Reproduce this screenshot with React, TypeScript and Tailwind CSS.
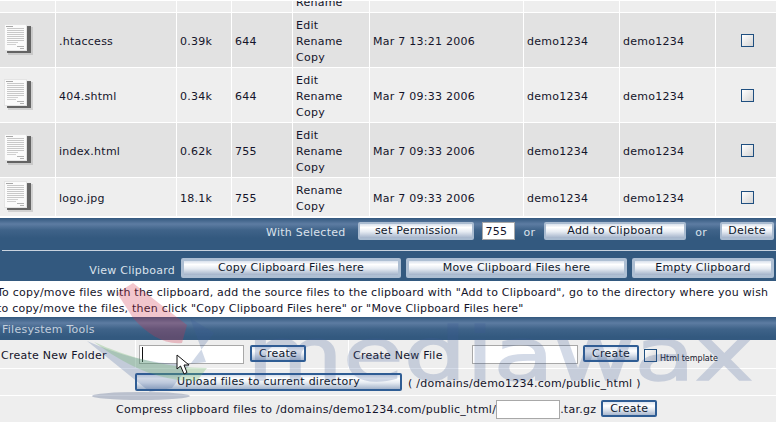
const rowGrid = 'grid grid-cols-[55px_120px_54px_60px_76px_153px_95px_95px_60px] gap-x-px';
const cell = 'flex items-center px-[3px] pt-[3px]';
const barBtn =
  'h-[18px] border-2 border-[#a9bbd0] rounded-[2px] bg-[linear-gradient(#d9e1ec,#ffffff_25%,#e6ebf2_55%,#a3b3ca)] text-[#10182c] text-[11px] leading-[13px] pb-[5px] text-center';
const wideBtn =
  'h-[20px] border-[3px] border-[#aebfd3] rounded-[2px] bg-[linear-gradient(#d9e1ec,#ffffff_25%,#e6ebf2_55%,#a3b3ca)] text-[#10182c] text-[11px] leading-[13px] pb-[4px] text-center';
const createBtn =
  'w-[56px] h-[17px] border-2 border-[#2f5d94] rounded-[2px] bg-[linear-gradient(#dfe6f0,#ffffff_30%,#e6ebf2_55%,#a9b8ce)] text-[#10182c] text-[11px] leading-[13px] pb-0 text-center';
const textInput = 'h-[19px] border border-[#a8a8a8] bg-white';
const barBg =
  'bg-[linear-gradient(#33587e,#5d7ca2_6px,#3f6389_12px,#33597f_20px,#33597f)]';

const files = [
  { name: '.htaccess', size: '0.39k', perm: '644', actions: ['Edit', 'Rename', 'Copy'], date: 'Mar 7 13:21 2006', bg: 'bg-[#e2e2e2]' },
  { name: '404.shtml', size: '0.34k', perm: '644', actions: ['Edit', 'Rename', 'Copy'], date: 'Mar 7 09:33 2006', bg: 'bg-[#eeeeee]' },
  { name: 'index.html', size: '0.62k', perm: '755', actions: ['Edit', 'Rename', 'Copy'], date: 'Mar 7 09:33 2006', bg: 'bg-[#e2e2e2]' },
  { name: 'logo.jpg', size: '18.1k', perm: '755', actions: ['Rename', 'Copy'], date: 'Mar 7 09:33 2006', bg: 'bg-[#eeeeee]' },
];

function DocIcon() {
  return (
    <svg width="30" height="32" viewBox="0 0 30 32">
      <rect x="4" y="3" width="25" height="28" fill="#9a9a9a" opacity="0.35" />
      <rect x="3" y="2" width="24" height="27" fill="#4a4a4a" opacity="0.8" />
      <rect x="0.5" y="0.5" width="22" height="26" fill="#fbfbfb" stroke="#e4e4e4" />
      <path d="M2 2.5h7" stroke="#a8a8a8" />
      {[4, 6, 8, 10, 12, 14, 16].map((y) => (
        <path key={y} d={`M3 ${y + 0.5}h17`} stroke="#c8c8c8" />
      ))}
      <path d="M3 18.5h11M3 20.5h9" stroke="#d0d0d0" />
      <path d="M13 22.5h7M16 24.5h4" stroke="#b4b4b4" />
    </svg>
  );
}

function Checkbox() {
  return <div className="w-[13px] h-[13px] border border-[#1f4f80] bg-[linear-gradient(135deg,#ffffff,#d4d4d4)]" />;
}

function FileRow({ file, height }: { file: (typeof files)[number]; height: string }) {
  return (
    <div className={`${rowGrid} ${height} mb-px`}>
      <div className={`${file.bg} flex items-center pl-[4px]`}>
        <DocIcon />
      </div>
      <div className={`${file.bg} ${cell}`}>{file.name}</div>
      <div className={`${file.bg} ${cell}`}>{file.size}</div>
      <div className={`${file.bg} ${cell}`}>{file.perm}</div>
      <div className={`${file.bg} flex flex-col justify-center px-[3px] pt-[3px]`}>
        {file.actions.map((a) => (
          <div key={a}>{a}</div>
        ))}
      </div>
      <div className={`${file.bg} ${cell}`}>{file.date}</div>
      <div className={`${file.bg} ${cell}`}>demo1234</div>
      <div className={`${file.bg} ${cell}`}>demo1234</div>
      <div className={`${file.bg} flex items-center justify-center pl-[3px]`}>
        <Checkbox />
      </div>
    </div>
  );
}

function Watermark() {
  return (
    <div className="absolute left-0 top-0 w-[776px] h-[422px] pointer-events-none overflow-hidden">
      <svg width="776" height="422" viewBox="0 0 776 422" className="absolute left-0 top-0">
        <ellipse cx="141" cy="396" rx="49" ry="4" fill="#6b7a9c" opacity="0.4" />
        <path d="M133 283 L187 325 L182 343 C165 345 148 335 133 318 L117 293 Z" fill="#d2344a" opacity="0.28" />
        <path
          d="M87 341 L150 392 L172 388 L214 333 L190 318 L198 340 L206 362 C170 368 130 360 87 341 Z"
          fill="#3c5a96"
          opacity="0.24"
        />
        <path d="M94 342 C125 356 165 368 207 368 L197 381 C160 382 125 365 94 342 Z" fill="#6cb56a" opacity="0.3" />
      </svg>
      <span className="absolute left-[247px] top-[311px] origin-left scale-x-[1.35] font-['DejaVu_Sans',sans-serif] text-[73px] leading-[88px] tracking-normal text-[#3c5a96] opacity-[0.22] [-webkit-text-stroke:1.5px_#3c5a96] whitespace-nowrap">
        mediawax
      </span>
      <svg width="16" height="24" viewBox="0 0 16 24" className="absolute left-[176px] top-[354px]">
        <path d="M1 1 L1 15 L4.5 12 L8 20 L11 18.5 L8 11 L13 11 Z" fill="#fff" stroke="#111" strokeWidth="1" />
      </svg>
    </div>
  );
}

export default function App() {
  return (
    <div className="relative w-[776px] h-[422px] overflow-hidden bg-white font-['DejaVu_Sans',sans-serif] text-[11px] leading-[16px] tracking-[0.25px] text-[#14142a]">
      {/* Table tail from the previous row */}
      <div className={`${rowGrid} mt-px mb-px h-[11px] overflow-hidden`}>
        {Array.from({ length: 9 }).map((_, i) => (
          <div key={i} className="bg-[#eeeeee] h-[11px] flex items-end px-[3px] pb-[1px]">
            {i === 4 ? <div>Rename</div> : null}
          </div>
        ))}
      </div>

      {files.map((f, i) => (
        <FileRow key={f.name} file={f} height={i === 3 ? 'h-[38px]' : 'h-[54px]'} />
      ))}

      {/* With selected / clipboard */}
      <div className={`mt-[2px] h-[63px] ${barBg} text-[#dbe2ec]`}>
        <div className="h-[32px] pt-[4px] flex items-start justify-end pr-[2px]">
          <span className="mr-[13px] pt-[3px]">With Selected</span>
          <button className={`${barBtn} w-[116px]`}>set Permission</button>
          <div className={`${textInput} ml-[8px] w-[33px] !h-[18px] text-[#14142a] pl-[2px] leading-[17px]`}>755</div>
          <span className="ml-[8px] pt-[3px]">or</span>
          <button className={`${barBtn} ml-[9px] w-[142px]`}>Add to Clipboard</button>
          <span className="ml-[9px] pt-[3px]">or</span>
          <button className={`${barBtn} ml-[13px] w-[54px]`}>Delete</button>
        </div>
        <div className="ml-[2px] h-px bg-[#c9d3df]" />
        <div className="pt-[7px] flex items-start justify-end pr-[2px]">
          <span className="mr-[6px] pt-[5px]">View Clipboard</span>
          <button className={`${wideBtn} w-[220px]`}>Copy Clipboard Files here</button>
          <button className={`${wideBtn} ml-[5px] w-[221px]`}>Move Clipboard Files here</button>
          <button className={`${wideBtn} ml-[5px] w-[142px]`}>Empty Clipboard</button>
        </div>
      </div>

      {/* Clipboard help, cut off by the left edge like the original page */}
      <div className="-ml-[3px] pt-[4px] h-[36px] whitespace-nowrap tracking-[0.22px]">
        <div>To copy/move files with the clipboard, add the source files to the clipboard with "Add to Clipboard", go to the directory where you wish</div>
        <div>to copy/move the files, then click "Copy Clipboard Files here" or "Move Clipboard Files here"</div>
      </div>

      {/* Filesystem tools */}
      <div className={`h-[23px] ${barBg} text-[#c3cfdd] pl-[2px] pt-px leading-[23px]`}>Filesystem Tools</div>

      <div className="grid grid-cols-[135px_212px_1fr] gap-x-px h-[28px]">
        <div className="bg-[#eeeeee] flex items-center pl-[1px] pt-[3px]">Create New Folder</div>
        <div className="bg-[#eeeeee] flex items-start pl-[3px] pt-[5px] relative">
          <div className={`${textInput} w-[105px]`} />
          <button className={`${createBtn} ml-[6px]`}>Create</button>
          <div className="absolute left-[6px] top-[7px] w-px h-[15px] bg-[#111]" />
        </div>
        <div className="bg-[#eeeeee] flex items-start pl-[4px] pt-[5px]">
          <span className="pt-[3px] w-[119px]">Create New File</span>
          <div className={`${textInput} w-[106px]`} />
          <button className={`${createBtn} ml-[5px]`}>Create</button>
          <div className="ml-[5px] mt-[4px]">
            <Checkbox />
          </div>
          <span className="ml-[3px] mt-[8px] text-[8px] leading-[12px] tracking-normal whitespace-nowrap">Html template</span>
        </div>
      </div>

      <div className="h-[26px] mt-px bg-[#eeeeee] flex items-start pl-[135px] pt-[4px]">
        <button className={`${barBtn} !border-[#2f5d94] w-[267px]`}>Upload files to current directory</button>
        <span className="ml-[6px] pt-[3px]">( /domains/demo1234.com/public_html )</span>
      </div>

      <div className="h-[26px] mt-px bg-[#eeeeee] flex items-start pl-[116px] pt-[4px]">
        <span className="pt-[2px] whitespace-nowrap">Compress clipboard files to /domains/demo1234.com/public_html/</span>
        <div className={`${textInput} w-[64px]`} />
        <span className="pt-[2px]">.tar.gz</span>
        <button className={`${createBtn} ml-[5px]`}>Create</button>
      </div>

      <Watermark />
    </div>
  );
}
